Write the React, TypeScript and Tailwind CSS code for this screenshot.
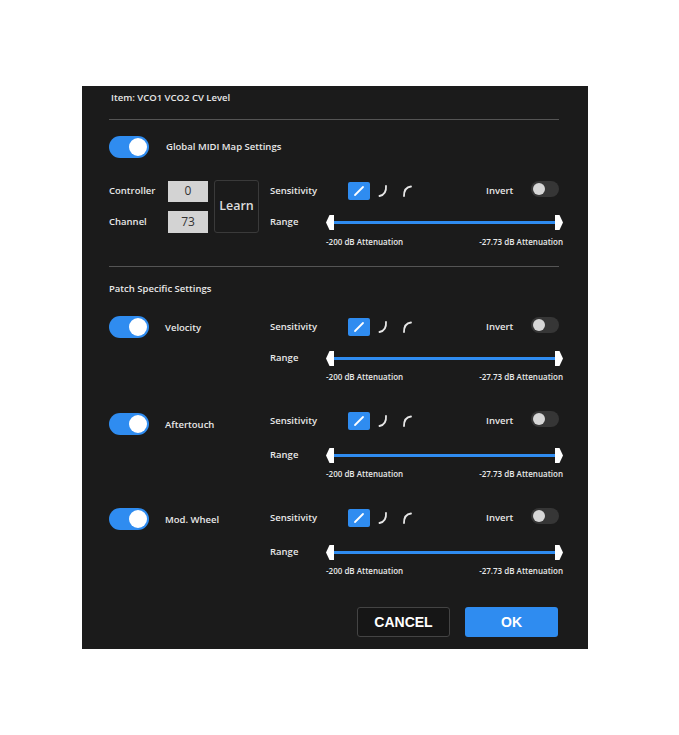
import { useState } from "react"

const font = { fontFamily: '"Open Sans", "Liberation Sans", sans-serif' }

function Toggle({ on, onClick }: { on: boolean; onClick: () => void }) {
  return (
    <button
      onClick={onClick}
      className={`relative h-[22px] w-[40px] shrink-0 rounded-full ${on ? "bg-[#2f8cf0]" : "bg-[#3a3a3a]"}`}
    >
      <span
        className={`absolute top-[2px] h-[18px] w-[18px] rounded-full bg-white ${on ? "left-[20px]" : "left-[2px]"}`}
      />
    </button>
  )
}

function SmallToggle({ on, onClick }: { on: boolean; onClick: () => void }) {
  return (
    <button
      onClick={onClick}
      className={`relative h-[16px] w-[28px] shrink-0 rounded-full ${on ? "bg-[#2f8cf0]" : "bg-[#363636]"}`}
    >
      <span
        className={`absolute top-[2px] h-[12px] w-[12px] rounded-full bg-[#d6d6d6] ${on ? "left-[14px]" : "left-[2px]"}`}
      />
    </button>
  )
}

function CurveIcons() {
  const [sel, setSel] = useState(0)
  const box = (i: number) =>
    `flex h-[18px] w-[22px] items-center justify-center rounded-[2px] ${sel === i ? "bg-[#2f8cf0]" : ""}`
  return (
    <div className="flex items-center gap-[2px]">
      <button className={box(0)} onClick={() => setSel(0)}>
        <svg width="12" height="12" viewBox="0 0 12 12">
          <path d="M2 10 L10 2" stroke="white" strokeWidth="1.8" strokeLinecap="round" fill="none" />
        </svg>
      </button>
      <button className={box(1)} onClick={() => setSel(1)}>
        <svg width="12" height="14" viewBox="0 0 12 14">
          <path d="M9 2 C9.5 8 7 11 2.5 12" stroke="#e6e6e6" strokeWidth="1.8" strokeLinecap="round" fill="none" />
        </svg>
      </button>
      <button className={box(2)} onClick={() => setSel(2)}>
        <svg width="12" height="14" viewBox="0 0 12 14">
          <path d="M3 12 C3 6 5.5 3 10 2.5" stroke="#e6e6e6" strokeWidth="1.8" strokeLinecap="round" fill="none" />
        </svg>
      </button>
    </div>
  )
}

function RangeSlider() {
  return (
    <div className="flex w-[237px] items-center">
      <svg width="8" height="15" viewBox="0 0 8 15" className="shrink-0">
        <path d="M8 0 L3.5 0 L0 7.5 L3.5 15 L8 15 Z" fill="white" />
      </svg>
      <div className="h-[3px] flex-1 bg-[#2f8cf0]" />
      <svg width="8" height="15" viewBox="0 0 8 15" className="shrink-0">
        <path d="M0 0 L4.5 0 L8 7.5 L4.5 15 L0 15 Z" fill="white" />
      </svg>
    </div>
  )
}

function SensitivityRow() {
  const [invert, setInvert] = useState(false)
  return (
    <div className="flex h-[22px] w-[292px] items-center">
      <span className="w-[78px]">Sensitivity</span>
      <CurveIcons />
      <span className="ml-auto w-[45px]">Invert</span>
      <div className="w-[31px]">
        <SmallToggle on={invert} onClick={() => setInvert(!invert)} />
      </div>
    </div>
  )
}

function RangeRow() {
  return (
    <div className="flex h-[22px] items-center">
      <span className="w-[56px]">Range</span>
      <RangeSlider />
    </div>
  )
}

function AttenuationLabels() {
  return (
    <div className="ml-[56px] flex h-[12px] w-[237px] items-center justify-between text-[8px]">
      <span>-200 dB Attenuation</span>
      <span>-27.73 dB Attenuation</span>
    </div>
  )
}

function PatchSetting({ label, top, rangeGap, labelShift }: { label: string; top: string; rangeGap: string; labelShift: string }) {
  const [on, setOn] = useState(true)
  return (
    <div className={`flex ${top}`}>
      <div className={`flex h-[22px] w-[161px] items-center ${labelShift}`}>
        <Toggle on={on} onClick={() => setOn(!on)} />
        <span className="ml-[16px] mt-[3px]">{label}</span>
      </div>
      <div className="flex flex-col">
        <SensitivityRow />
        <div className={rangeGap}>
          <RangeRow />
        </div>
        <div className="mt-[2px]">
          <AttenuationLabels />
        </div>
      </div>
    </div>
  )
}

function App() {
  const [globalOn, setGlobalOn] = useState(true)

  return (
    <div className="min-h-screen w-full bg-white pl-[82px] pt-[86px]" style={font}>
      <div className="flex h-[563px] w-[506px] flex-col bg-[#1b1b1b] pl-[27px] text-[9.5px] font-semibold text-[#e8e8e8]">
        <div className="flex h-[24px] items-center pl-[2px]">Item: VCO1 VCO2 CV Level</div>
        <div className="mt-[9px] h-px w-[450px] bg-[#555]" />

        <div className="mt-[16px] flex h-[22px] items-center">
          <Toggle on={globalOn} onClick={() => setGlobalOn(!globalOn)} />
          <span className="ml-[17px]">Global MIDI Map Settings</span>
        </div>

        <div className="mt-[22px] flex">
          <div className="flex w-[161px]">
            <div className="flex flex-col">
              <div className="flex h-[22px] items-center">
                <span className="w-[59px]">Controller</span>
                <div className="flex h-[21px] w-[40px] items-center justify-center bg-[#d3d3d3] text-[12px] font-normal text-[#333]">0</div>
              </div>
              <div className="mt-[9px] flex h-[22px] items-center">
                <span className="w-[59px]">Channel</span>
                <div className="flex h-[22px] w-[40px] items-center justify-center bg-[#d3d3d3] text-[12px] font-normal text-[#333]">73</div>
              </div>
            </div>
            <button className="ml-[6px] flex h-[53px] w-[45px] items-center justify-center rounded-[3px] border border-[#3a3a3a] text-[12.5px] font-semibold text-[#ddd]">
              Learn
            </button>
          </div>
          <div className="flex flex-col">
            <SensitivityRow />
            <div className="mt-[9px]">
              <RangeRow />
            </div>
            <div className="mt-[3px]">
              <AttenuationLabels />
            </div>
          </div>
        </div>

        <div className="mt-[18px] h-px w-[450px] bg-[#555]" />
        <div className="mt-[15px] flex h-[14px] items-center">Patch Specific Settings</div>

        <PatchSetting label="Velocity" top="mt-[20px]" rangeGap="mt-[9px]" labelShift="" />
        <PatchSetting label="Aftertouch" top="mt-[27px]" rangeGap="mt-[12px]" labelShift="mt-[3px]" />
        <PatchSetting label="Mod. Wheel" top="mt-[27px]" rangeGap="mt-[12px]" labelShift="mt-[1px]" />

        <div className="mt-[30px] flex w-[449px] justify-end gap-[15px]" style={{ fontFamily: '"Liberation Sans", Arial, sans-serif' }}>
          <button className="h-[30px] w-[93px] rounded-[3px] border border-[#444] bg-[#161616] text-[14px] font-bold text-white">
            CANCEL
          </button>
          <button className="h-[30px] w-[93px] rounded-[3px] bg-[#2f8cf0] text-[14px] font-bold text-white">
            OK
          </button>
        </div>
      </div>
    </div>
  )
}

export default App
